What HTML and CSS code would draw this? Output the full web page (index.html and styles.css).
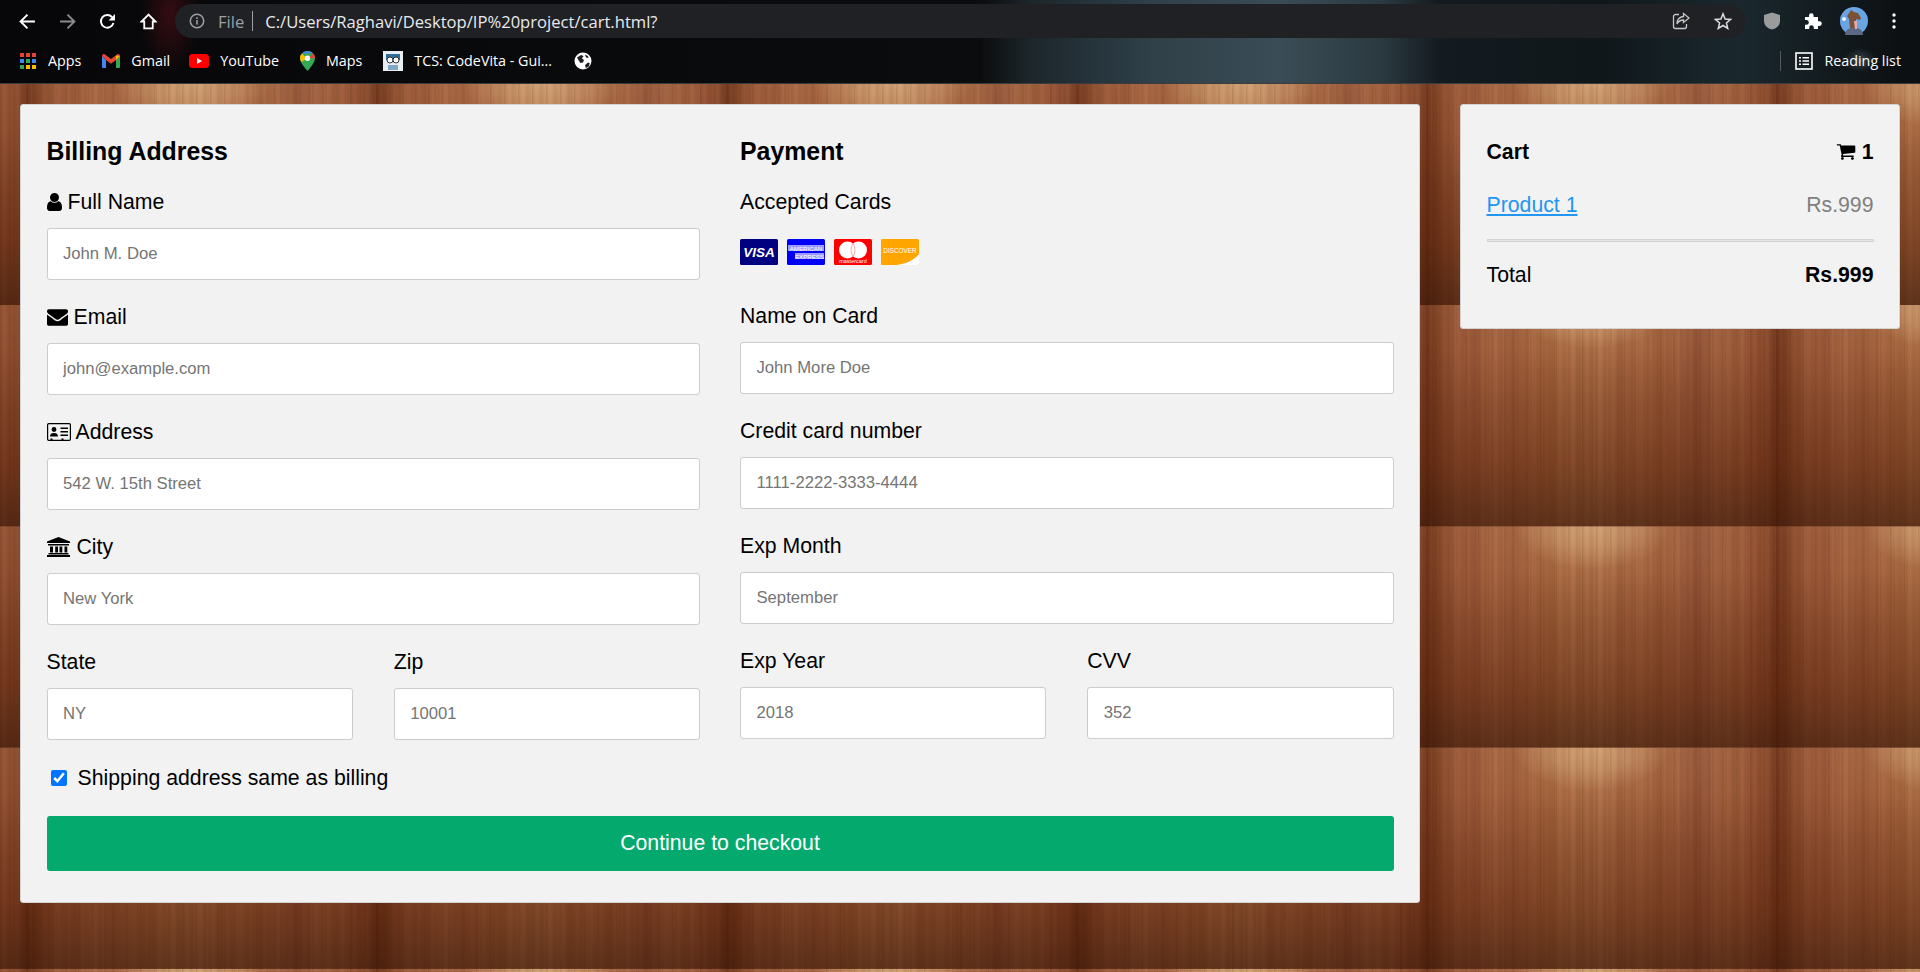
FILE: index.html
```html
<!DOCTYPE html>
<html lang="en">

<head>
    <meta charset="UTF-8">
    <meta name="viewport" content="width=device-width, initial-scale=1.0">
    <title>Cart</title>
    <link rel="stylesheet" href="styles.css">
</head>

<body>
    <!-- Browser chrome -->
    <header class="chrome">
        <div class="toolbar">
            <div class="nav-buttons">
                <svg class="nav-icon" viewBox="0 0 16 16"><path d="M15 8H2M8 1.500 1.500 8 8 14.500" fill="none" stroke="#fff" stroke-width="1.800"/></svg>
                <svg class="nav-icon" viewBox="0 0 16 16"><path d="M1 8h13M8 1.500 14.500 8 8 14.500" fill="none" stroke="#8a8b8d" stroke-width="1.800"/></svg>
                <svg class="nav-icon" viewBox="0 0 16 16"><path d="M13.600 9.500A6 6 0 1 1 12.300 3.800" fill="none" stroke="#fff" stroke-width="1.800"/><path d="M15 1v6H9z" fill="#fff"/></svg>
                <svg class="nav-icon home" viewBox="0 0 16 16"><path d="M8 1.500 1.500 8H4v6.500h8V8h2.500z" fill="none" stroke="#fff" stroke-width="1.700"/></svg>
            </div>
            <div class="address-bar">
                <svg class="info-icon" viewBox="0 0 16 16"><circle cx="8" cy="8" r="6.700" fill="none" stroke="#9aa0a6" stroke-width="1.500"/><path d="M7.200 7h1.600v4.500H7.200zM7.200 4.300h1.600v1.600H7.200z" fill="#9aa0a6"/></svg>
                <span class="scheme">File</span>
                <span class="scheme-sep"></span>
                <span class="url">C:/Users/Raghavi/Desktop/IP%20project/cart.html?</span>
                <svg class="bar-icon share" viewBox="0 0 18 18"><path d="M7 2.500H3.500a2 2 0 0 0-2 2v10a2 2 0 0 0 2 2h9a2 2 0 0 0 2-2V12" fill="none" stroke="#c4c7c5" stroke-width="1.300"/><path d="M11.500 1.500 17 6l-5.500 4.500V8C8.500 8 6.500 9 5 12c0-4 2.500-7 6.500-7.500z" fill="none" stroke="#c4c7c5" stroke-width="1.300"/></svg>
                <svg class="bar-icon star" viewBox="0 0 18 18"><path d="M9 1.800 11.100 7l5.500.4-4.200 3.600 1.300 5.400L9 13.500l-4.700 2.900L5.600 11 1.400 7.400 6.900 7z" fill="none" stroke="#dcdde0" stroke-width="1.500"/></svg>
            </div>
            <div class="extensions">
                <svg class="ext-icon" viewBox="0 0 18 18"><path d="M9 .5 17 3v6c0 4.500-3.500 7.500-8 8.500C4.500 16.500 1 13.500 1 9V3z" fill="#9a9b9d"/></svg>
                <svg class="ext-icon" viewBox="0 0 18 18"><path d="M1 5h4V3.500a2.300 2.300 0 0 1 4.600 0V5h4.400v4.300h1.500a2.300 2.300 0 0 1 0 4.600H14V17H9.800v-1.500a2.300 2.300 0 0 0-4.600 0V17H1v-4.300h1.500a2.300 2.300 0 0 0 0-4.600H1z" fill="#fff"/></svg>
                <svg class="avatar" viewBox="0 0 28 28">
                    <circle cx="14" cy="14" r="14" fill="#6aa5e3"/>
                    <path d="M5 28c0-5 4-7 9-8 5 1 9 3 9 8z" fill="#5b6a82"/>
                    <path d="M11 3l3 2 4 1 3 5-1 2-4-1 0 9-6 0-1-9-2-3z" fill="#7b5235"/>
                    <path d="M14 14l3 0 0 8-2 0z" fill="#e7a8b5"/>
                    <circle cx="4" cy="12" r="2" fill="#eef4fb"/>
                </svg>
                <svg class="menu-dots" viewBox="0 0 4 16"><circle cx="2" cy="2" r="1.700"/><circle cx="2" cy="8" r="1.700"/><circle cx="2" cy="14" r="1.700"/></svg>
            </div>
        </div>
        <div class="bookmarks">
            <a class="bookmark apps">
                <svg class="bm-icon" width="16" height="16" viewBox="0 0 16 16">
                    <path d="M0 0h4v4H0z" fill="#ea4335"/><path d="M6 0h4v4H6z" fill="#ea4335"/><path d="M12 0h4v4h-4z" fill="#ea4335"/>
                    <path d="M0 6h4v4H0z" fill="#4285f4"/><path d="M6 6h4v4H6z" fill="#34a853"/><path d="M12 6h4v4h-4z" fill="#4285f4"/>
                    <path d="M0 12h4v4H0z" fill="#34a853"/><path d="M6 12h4v4H6z" fill="#fbbc04"/><path d="M12 12h4v4h-4z" fill="#fbbc04"/>
                </svg>
                <span>Apps</span>
            </a>
            <a class="bookmark gmail">
                <svg class="bm-icon" width="18" height="14" viewBox="0 0 18 14">
                    <path d="M0 2v10.700C0 13.400.6 14 1.300 14H4V6z" fill="#4285f4"/>
                    <path d="M14 6v8h2.700c.7 0 1.300-.6 1.300-1.300V2z" fill="#34a853"/>
                    <path d="M4 6 0 2C0 .4 1.800-.5 3 .4L9 5l6-4.600c1.200-.9 3 0 3 1.600l-4 4-5 3.800z" fill="#ea4335"/>
                    <path d="M14 1.500 18 2l-4 4z" fill="#fbbc04"/>
                </svg>
                <span>Gmail</span>
            </a>
            <a class="bookmark youtube">
                <svg class="bm-icon" width="20" height="14" viewBox="0 0 20 14"><rect width="20" height="14" rx="3.500" fill="#f00"/><path d="M8 4l5 3-5 3z" fill="#fff"/></svg>
                <span>YouTube</span>
            </a>
            <a class="bookmark maps">
                <svg class="bm-icon" width="15" height="20" viewBox="0 0 15 20">
                    <path d="M7.500 0C3.400 0 0 3.300 0 7.300 0 12.500 7.500 20 7.500 20S15 12.500 15 7.300C15 3.300 11.600 0 7.500 0z" fill="#34a853"/>
                    <path d="M2 2.500 12.800 2.300C11.500.8 9.600 0 7.500 0 5.300 0 3.400 1 2 2.500z" fill="#4285f4"/>
                    <path d="M0 7.300C0 5.200.8 3.700 2 2.500L7 7.500 1.500 11C.5 9.700 0 8.500 0 7.300z" fill="#fbbc04"/>
                    <path d="M12.800 2.300C14.100 3.500 15 5.300 15 7.300L9 7z" fill="#ea4335"/>
                    <circle cx="7.500" cy="7.300" r="2.700" fill="#fff"/>
                </svg>
                <span>Maps</span>
            </a>
            <a class="bookmark tcs">
                <svg class="bm-icon" width="20" height="20" viewBox="0 0 20 20">
                    <rect width="20" height="20" fill="#e9eef2"/>
                    <path d="M3 3h14v6H3z" fill="#2d6f9b"/>
                    <circle cx="7" cy="9" r="3" fill="#fff" stroke="#333"/><circle cx="13" cy="9" r="3" fill="#fff" stroke="#333"/>
                    <path d="M5 14h10v5H5z" fill="#7fa8c4"/>
                </svg>
                <span>TCS: CodeVita - Gui...</span>
            </a>
            <a class="bookmark globe">
                <svg class="bm-icon" width="18" height="18" viewBox="0 0 18 18"><circle cx="9" cy="9" r="8.500" fill="#fff"/><path d="M3 5.500 7 3l2.500 1L8 6.500 10 8l-1 2.500-2.500.5L5 9zM11 13l3-2.500 1.800.5-1 3.500-3 1.500zM11 2.500l3 1.500.5 2-2.500-.5z" fill="#202124"/></svg>
            </a>
            <div class="reading-list">
                <span class="bm-divider"></span>
                <svg class="bm-icon" width="18" height="18" viewBox="0 0 18 18"><rect x="1" y="1" width="16" height="16" fill="none" stroke="#fff" stroke-width="1.600"/><path d="M4 5h2v1.500H4zM7.500 5H14v1.500H7.500zM4 8.300h2v1.500H4zM7.500 8.300H14v1.500H7.500zM4 11.600h2v1.500H4zM7.500 11.600H14v1.500H7.500z" fill="#fff"/></svg>
                <span>Reading list</span>
            </div>
        </div>
    </header>

    <main class="page">
        <form class="checkout">
            <div class="columns">
                <div class="column">
                    <h3>Billing Address</h3>
                    <label class="field-label">
                        <svg class="fa user" viewBox="256 128 1280 1536"><path d="M1536 1399q0 109-62.500 187t-150.500 78h-854q-88 0-150.500-78t-62.500-187q0-85 8.500-160.500t31.500-152 58.500-131 94-89 134.500-34.500q131 128 313 128t313-128q76 0 134.500 34.500t94 89 58.500 131 31.500 152 8.500 160.500zm-256-887q0 159-112.500 271.500t-271.500 112.500-271.500-112.500-112.500-271.500 112.500-271.500 271.500-112.500 271.500 112.500 112.500 271.500z"/></svg>
                        Full Name
                    </label>
                    <input class="text-input" type="text" placeholder="John M. Doe">
                    <label class="field-label">
                        <svg class="fa envelope" viewBox="0 256 1792 1408"><path d="M1792 710v794q0 66-47 113t-113 47h-1472q-66 0-113-47t-47-113v-794q44 49 101 87 362 246 497 345 57 42 92.500 65.500t94.500 48 110 24.500h2q51 0 110-24.500t94.500-48 92.500-65.500q170-123 498-345 57-39 100-87zm0-294q0 79-49 151t-122 123q-376 261-468 325-10 7-42.500 30.500t-54 38-52 32.500-57.500 27-50 9h-2q-23 0-50-9t-57.500-27-52-32.500-54-38-42.500-30.500q-91-64-262-182.500t-205-142.500q-62-42-117-115.500t-55-136.500q0-78 41.500-130t118.500-52h1472q65 0 112.500 47t47.500 113z"/></svg>
                        Email
                    </label>
                    <input class="text-input" type="text" placeholder="john@example.com">
                    <label class="field-label">
                        <svg class="fa id-card" viewBox="0 0 24 18">
                            <rect x=".6" y=".6" width="22.800" height="16.800" rx="1.200" fill="none" stroke="#000" stroke-width="1.200"/>
                            <circle cx="7" cy="6.500" r="2.400"/>
                            <path d="M3 13.500c0-2.500 1.500-3.500 4-3.500s4 1 4 3.500zM13.500 4.500H21V6h-7.500zM13.500 8H21v1.500h-7.500zM13.500 11.500H21V13h-7.500z"/>
                            <path d="M3.500 15.500h2v1.500h-2zM14.500 15.500h2v1.500h-2z"/>
                        </svg>
                        Address
                    </label>
                    <input class="text-input" type="text" placeholder="542 W. 15th Street">
                    <label class="field-label">
                        <svg class="fa bank" viewBox="0 0 23 20">
                            <path d="M11.500 0 23 4.500V6H0V4.500zM1 7h21v1.500H1zM3 9.500h3v6H3zM8.200 9.500h2.800v6H8.200zM12.500 9.500h2.800v6h-2.800zM17.500 9.500h2.800v6h-2.800zM1.500 16h20v1.500h-20zM0 18h23v2H0z"/>
                        </svg>
                        City
                    </label>
                    <input class="text-input" type="text" placeholder="New York">
                    <div class="pair">
                        <div>
                            <label class="field-label">State</label>
                            <input class="text-input" type="text" placeholder="NY">
                        </div>
                        <div>
                            <label class="field-label">Zip</label>
                            <input class="text-input" type="text" placeholder="10001">
                        </div>
                    </div>
                </div>

                <div class="column">
                    <h3>Payment</h3>
                    <label class="field-label">Accepted Cards</label>
                    <div class="card-icons">
                        <svg class="card-logo" viewBox="0 0 38 26"><rect width="38" height="26" rx="1.500" fill="#000080"/><text x="19" y="18" class="logo-visa">VISA</text></svg>
                        <svg class="card-logo" viewBox="0 0 38 26"><rect width="38" height="26" rx="1.500" fill="#0000f5"/><rect x="1" y="6" width="36" height="6" fill="#9b9bff"/><rect x="8" y="14" width="29" height="6" fill="#9b9bff"/><text x="19" y="11.500" class="logo-amex">AMERICAN</text><text x="22.500" y="19.500" class="logo-amex">EXPRESS</text></svg>
                        <svg class="card-logo" viewBox="0 0 38 26"><rect width="38" height="26" rx="1.500" fill="#f00"/><circle cx="13.500" cy="11" r="8.500" fill="#fff"/><circle cx="24.500" cy="11" r="8.500" fill="#fff"/><path d="M19 4.500c2.500 3.500 2.500 9.500 0 13-2.500-3.500-2.500-9.500 0-13z" fill="none" stroke="#ff8080" stroke-width=".7"/><text x="19" y="24" class="logo-mc">mastercard</text></svg>
                        <svg class="card-logo" viewBox="0 0 38 26"><rect width="38" height="26" rx="1.500" fill="#ffa500"/><path d="M38 15v9.500c0 .8-.7 1.500-1.500 1.500H16c10-1.500 17-5 22-11z" fill="#fff"/><text x="19" y="13.500" class="logo-disc">DISCOVER</text></svg>
                    </div>
                    <label class="field-label">Name on Card</label>
                    <input class="text-input" type="text" placeholder="John More Doe">
                    <label class="field-label">Credit card number</label>
                    <input class="text-input" type="text" placeholder="1111-2222-3333-4444">
                    <label class="field-label">Exp Month</label>
                    <input class="text-input" type="text" placeholder="September">
                    <div class="pair">
                        <div>
                            <label class="field-label">Exp Year</label>
                            <input class="text-input" type="text" placeholder="2018">
                        </div>
                        <div>
                            <label class="field-label">CVV</label>
                            <input class="text-input" type="text" placeholder="352">
                        </div>
                    </div>
                </div>
            </div>
            <label class="same-address">
                <input type="checkbox" checked>
                Shipping address same as billing
            </label>
            <button class="checkout-button" type="button">Continue to checkout</button>
        </form>

        <aside class="cart">
            <h4 class="cart-title">
                <span>Cart</span>
                <span class="cart-count">
                    <svg class="fa cart-icon" viewBox="0 256 1792 1408"><path d="M704 1536q0 52-38 90t-90 38-90-38-38-90 38-90 90-38 90 38 38 90zm896 0q0 52-38 90t-90 38-90-38-38-90 38-90 90-38 90 38 38 90zm128-1088v512q0 24-16.500 42.500t-40.500 21.500l-1044 122q13 60 13 70 0 16-24 64h920q26 0 45 19t19 45-19 45-45 19h-1024q-26 0-45-19t-19-45q0-11 8-31.500t16-36 21.500-40 15.500-29.500l-177-823h-204q-26 0-45-19t-19-45 19-45 45-19h256q16 0 28.500 6.500t19.500 15.500 13 24.500 8 26 5.500 29.500 4.500 26h1201q26 0 45 19t19 45z"/></svg>
                    1
                </span>
            </h4>
            <p class="cart-row item">
                <a href="#">Product 1</a>
                <span class="price">Rs.999</span>
            </p>
            <hr class="cart-rule">
            <p class="cart-row">
                <span>Total</span>
                <b>Rs.999</b>
            </p>
        </aside>
    </main>
</body>

</html>
```

FILE: styles.css
```css
html,
body {
    margin: 0;
    height: 100%;
    overflow: hidden;
}

body {
    font-family: "Liberation Sans", Arial, sans-serif;
    font-size: 21.25px;
    color: #000;
    display: flex;
    flex-direction: column;
}

/* Browser chrome */
.chrome {
    height: 83px;
    border-bottom: 1px solid #3a3d40;
    color: #fff;
    font-family: "Open Sans", "Noto Sans", sans-serif;
    background-color: #08090b;
    background-image:
        radial-gradient(ellipse 30px 60px at 170px 15px, rgba(120, 20, 30, 0.4), transparent),
        radial-gradient(ellipse 16px 12px at 1860px 60px, rgba(110, 140, 145, 0.4), transparent),
        linear-gradient(90deg, #070709 0, #0b0c0e 980px, #1c262b 1030px, #2f4049 1150px, #3a4c55 1280px, #2b3a41 1380px, #141b20 1440px, #10171b 1600px, #1a282e 1740px, #0d1013 1900px);
}

.toolbar {
    height: 42px;
    display: flex;
    align-items: center;
    padding: 0 0 0 19px;
}

.nav-buttons {
    display: flex;
    gap: 23px;
    width: 156px;
}

.nav-icon {
    width: 17px;
    height: 17px;
}

.home {
    margin-left: 1px;
}

.address-bar {
    width: 1570px;
    height: 34px;
    box-sizing: border-box;
    background-color: #202124;
    border-radius: 17px;
    display: flex;
    align-items: center;
    padding: 0 13px 0 14px;
    font-size: 16.6px;
}

.info-icon {
    width: 16px;
    height: 16px;
}

.scheme {
    color: #9aa0a6;
    margin-left: 13px;
}

.scheme-sep {
    width: 1px;
    height: 20px;
    background-color: #9aa0a6;
    margin: 0 12px 0 8px;
}

.url {
    color: #e8eaed;
    flex: 1;
}

.bar-icon {
    width: 18px;
    height: 18px;
}

.share {
    margin-right: 24px;
}

.extensions {
    display: flex;
    align-items: center;
    padding-left: 18px;
}

.ext-icon {
    width: 18px;
    height: 18px;
    margin-right: 23px;
}

.avatar {
    width: 28px;
    height: 28px;
    margin-left: -5px;
}

.menu-dots {
    width: 4px;
    height: 16px;
    fill: #fff;
    margin-left: 24px;
}

.bookmarks {
    height: 41px;
    box-sizing: border-box;
    display: flex;
    align-items: center;
    padding: 0 0 4px 20px;
    font-size: 14.3px;
}

.bookmark {
    display: flex;
    align-items: center;
    gap: 11px;
    margin-right: 21px;
}

.apps {
    gap: 12px;
}

.gmail {
    margin-right: 19px;
}

.tcs {
    margin-right: 22px;
}

.reading-list {
    display: flex;
    align-items: center;
    margin-left: auto;
    padding-right: 19px;
    gap: 11px;
}

.bm-divider {
    width: 1px;
    height: 20px;
    background-color: #55585c;
    margin-right: 3px;
}

/* Page */
.page {
    flex: 1;
    display: flex;
    align-items: flex-start;
    gap: 40px;
    padding: 20px;
    background-color: #8a4a2b;
    background-size: 350px 221.3px;
    background-position: 0 -0.3px;
    background-image:
        linear-gradient(180deg, rgba(255, 220, 180, 0.04) 0, transparent 20%, rgba(70, 20, 0, 0.22) 45%, rgba(70, 20, 0, 0.42) 72%, rgba(50, 18, 4, 0.62) 100%),
        repeating-linear-gradient(90deg, rgba(120, 70, 30, 0.22) 0, transparent 3px, transparent 6px, rgba(120, 70, 30, 0.14) 9px, transparent 14px),
        radial-gradient(ellipse 78px 44px at 192px 0, rgba(226, 186, 140, 0.62), rgba(226, 186, 140, 0.35) 55%, transparent),
        radial-gradient(ellipse 125px 75px at 200px 0, rgba(200, 140, 95, 0.28), transparent),
        repeating-linear-gradient(90deg, rgba(40, 10, 0, 0.09) 0, transparent 2px, rgba(255, 200, 160, 0.05) 5px, transparent 7px, rgba(40, 10, 0, 0.06) 11px, rgba(255, 200, 160, 0.04) 13px),
        repeating-linear-gradient(90deg, rgba(60, 20, 0, 0.08) 0, transparent 9px, rgba(255, 210, 170, 0.04) 21px, transparent 27px, rgba(60, 20, 0, 0.07) 37px),
        linear-gradient(90deg, #985436 0, #8a492c 14px, #6d3219 28px, #864729 38px, #9c5838 62px, #a56240 100px, #a15e3b 125px, #a8673f 150px, #ad6f48 190px, #a5633f 235px, #a2603c 262px, #97563a 300px, #a3623e 330px, #985436 350px);
}

/* Checkout form */
.checkout,
.cart {
    background-color: #f2f2f2;
    border: 1px solid #d3d3d3;
    border-radius: 3px;
    box-sizing: border-box;
    flex: none;
}

.checkout {
    width: 1400px;
    height: 799px;
    padding: 6px 25.5px 18px;
}

.columns {
    display: flex;
    gap: 40px;
}

.column {
    flex: 1;
    min-width: 0;
}

h3 {
    font-size: 24.86px;
    line-height: 28px;
    margin: 25.5px 0 23.5px;
}

.field-label {
    display: flex;
    align-items: center;
    gap: 6px;
    height: 28px;
    margin-bottom: 12px;
}

.fa {
    display: block;
    flex: none;
}

.user {
    width: 15px;
    height: 18px;
}

.envelope {
    width: 21px;
    height: 17px;
}

.id-card {
    width: 24px;
    height: 18px;
    margin-right: -1px;
}

.bank {
    width: 23px;
    height: 20px;
    margin-right: 1px;
}

.text-input {
    display: block;
    width: 100%;
    height: 52px;
    box-sizing: border-box;
    margin: 0 0 23px;
    padding: 0 15.5px;
    border: 1px solid #ccc;
    border-radius: 3px;
    background-color: #fff;
    font-family: "Liberation Sans", Arial, sans-serif;
    font-size: 16.67px;
}

.text-input::placeholder {
    color: #757575;
}

.pair {
    display: flex;
    gap: 41px;
}

.pair > div {
    flex: 1;
}

.card-icons {
    display: flex;
    gap: 9px;
    height: 39px;
    padding-top: 11px;
    margin-bottom: 24px;
}

.card-logo {
    width: 38px;
    height: 26px;
}

.card-logo text {
    font-family: "Liberation Sans", Arial, sans-serif;
    text-anchor: middle;
    fill: #fff;
}

.logo-visa {
    font-size: 13.500px;
    font-weight: bold;
    font-style: italic;
}

.logo-amex {
    font-size: 6.200px;
}

.logo-mc {
    font-size: 5.500px;
}

.logo-disc {
    font-size: 6.400px;
}

.same-address {
    display: flex;
    align-items: center;
    height: 28px;
    gap: 11px;
    padding-left: 4.500px;
    margin: 1px 0 24px;
}

.same-address input {
    width: 15.600px;
    height: 15.600px;
    margin: 0;
}

.checkout-button {
    display: block;
    width: 100%;
    height: 55px;
    border: none;
    border-radius: 3px;
    background-color: #04aa6d;
    color: #fff;
    font-family: "Liberation Sans", Arial, sans-serif;
    font-size: 21.25px;
}

/* Cart */
.cart {
    width: 440px;
    height: 225px;
    padding: 6px 25.5px 0;
}

.cart-title,
.cart-row {
    display: flex;
    justify-content: space-between;
    align-items: center;
    height: 28px;
    font-size: 21.25px;
}

.cart-title {
    margin: 27px 0 25px;
}

.cart-count {
    display: flex;
    align-items: center;
    gap: 6px;
}

.cart-icon {
    width: 20px;
    height: 16px;
}

.cart-row {
    margin: 0;
}

.item a {
    color: #2196f3;
}

.price {
    color: #808080;
}

.cart-rule {
    height: 1px;
    margin: 20px 0 19px;
    border: 1px solid #d3d3d3;
    background-color: #e4e4e4;
}
```
